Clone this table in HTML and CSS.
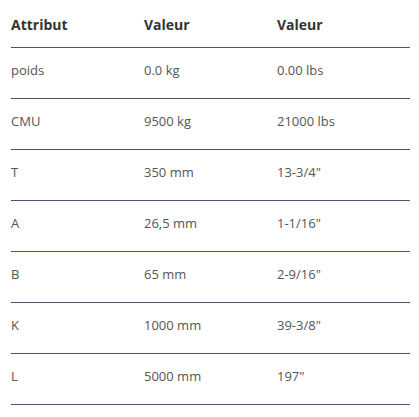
FILE: index.html
```html
<!DOCTYPE html>
<html lang="fr">
<head>
<meta charset="utf-8">
<title>Attributs</title>
<link rel="stylesheet" href="styles.css">
</head>
<body>
<table class="spec">
  <thead>
    <tr><th>Attribut</th><th>Valeur</th><th>Valeur</th></tr>
  </thead>
  <tbody>
    <tr><td>poids</td><td>0.0 kg</td><td>0.00 lbs</td></tr>
    <tr><td>CMU</td><td>9500 kg</td><td>21000 lbs</td></tr>
    <tr><td>T</td><td>350 mm</td><td>13-3/4"</td></tr>
    <tr><td>A</td><td>26,5 mm</td><td>1-1/16"</td></tr>
    <tr><td>B</td><td>65 mm</td><td>2-9/16"</td></tr>
    <tr><td>K</td><td>1000 mm</td><td>39-3/8"</td></tr>
    <tr><td>L</td><td>5000 mm</td><td>197"</td></tr>
  </tbody>
</table>
</body>
</html>
```
FILE: styles.css
```css
html, body {
  margin: 0;
  padding: 0;
  background: #fff;
}
body {
  padding: 0 10px 0 11px;
  font-family: "Open Sans", "Liberation Sans", sans-serif;
}
.spec {
  width: 399px;
  border-collapse: collapse;
  table-layout: fixed;
}
.spec th,
.spec td {
  width: 133px;
  text-align: left;
  padding: 0;
  vertical-align: top;
  line-height: 20px;
  border-bottom: 1px solid #4d5270;
}
.spec th {
  font-size: 14px;
  font-weight: 700;
  color: #333;
  padding-top: 15px;
  padding-bottom: 12px;
}
.spec td {
  font-size: 13px;
  font-weight: 400;
  color: #555;
  padding-top: 12px;
  padding-bottom: 18px;
}
```
